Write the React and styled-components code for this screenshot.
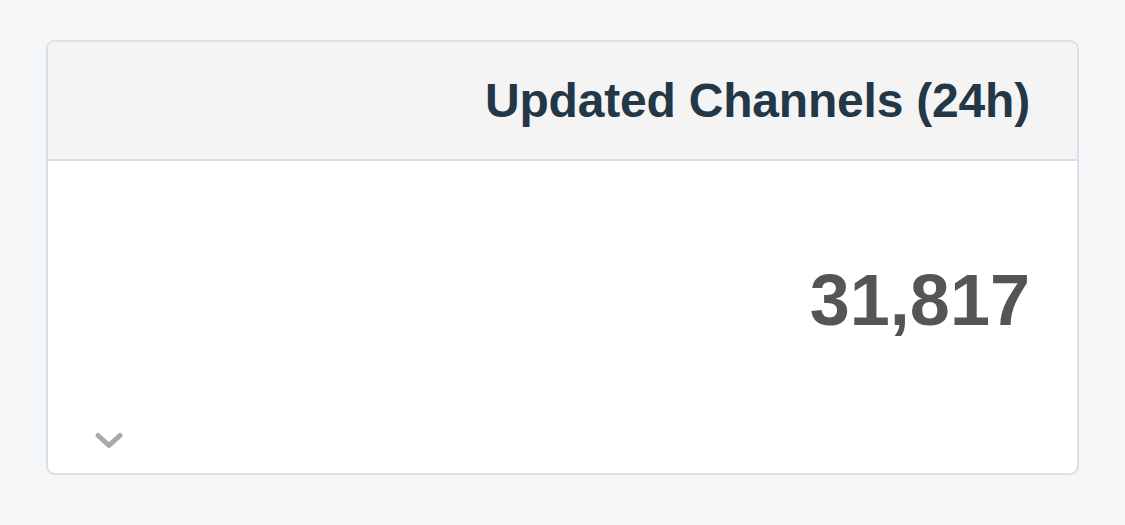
import React from "react";
import styled, { createGlobalStyle } from "styled-components";

const Global = createGlobalStyle`
  html, body { margin: 0; padding: 0; background: #f5f6f8; }
  body { font-family: "Liberation Sans", Arial, sans-serif; }
`;

const Page = styled.div`
  padding: 40px 46px 0 46px;
  width: 1125px;
  height: 525px;
  box-sizing: border-box;
`;

const Card = styled.div`
  width: 1033px;
  height: 435px;
  box-sizing: border-box;
  border: 2px solid #d9e0e8;
  border-radius: 9px;
  background: #ffffff;
  overflow: hidden;
  display: flex;
  flex-direction: column;
`;

const Header = styled.div`
  height: 119px;
  box-sizing: border-box;
  background: #f4f4f5;
  border-bottom: 2px solid #d6dee7;
  display: flex;
  align-items: center;
  justify-content: flex-end;
  padding-right: 47px;
`;

const Title = styled.h2`
  margin: 0;
  font-size: 48px;
  font-weight: 700;
  color: #243746;
  letter-spacing: -0.2px;
`;

const Body = styled.div`
  flex: 1;
  display: flex;
  flex-direction: column;
  padding: 0 47px 20px 44px;
`;

const Value = styled.div`
  margin-top: 98px;
  text-align: right;
  font-size: 72px;
  line-height: 82px;
  font-weight: 700;
  color: #555555;
`;

const Toggle = styled.button`
  margin-top: auto;
  width: 36px;
  height: 24px;
  padding: 0;
  border: none;
  background: transparent;
  display: flex;
  align-items: center;
  justify-content: center;
  cursor: pointer;
`;

export default function App() {
  return (
    <>
      <Global />
      <Page>
        <Card>
          <Header>
            <Title>Updated Channels (24h)</Title>
          </Header>
          <Body>
            <Value>31,817</Value>
            <Toggle aria-label="Expand">
              <svg width="34" height="22" viewBox="0 0 34 22">
                <path d="M5 5.5 L16 15.5 L27 5.5" fill="none" stroke="#a9a9a9" strokeWidth="5" strokeLinecap="round" strokeLinejoin="round" />
              </svg>
            </Toggle>
          </Body>
        </Card>
      </Page>
    </>
  );
}
